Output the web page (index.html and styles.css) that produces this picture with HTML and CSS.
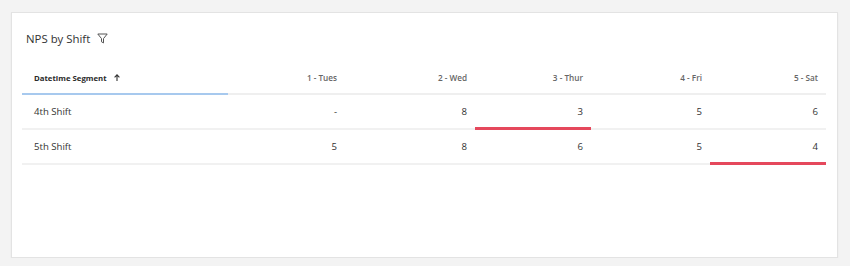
FILE: index.html
```html
<!DOCTYPE html>
<html>
<head>
<meta charset="utf-8">
<link rel="stylesheet" href="styles.css">
</head>
<body>
<div class="card">
  <div class="title">
    <span>NPS by Shift</span>
    <svg class="filter" width="11" height="11" viewBox="0 0 11 11"><path d="M0.8 1h9.4L6.5 5.6v4.3L4.5 8.8V5.6Z" fill="none" stroke="#555" stroke-width="1" stroke-linejoin="round"/></svg>
  </div>
  <table class="grid">
    <colgroup>
      <col class="c0"><col class="c1"><col class="c2"><col class="c3"><col class="c4"><col class="c5">
    </colgroup>
    <thead>
      <tr>
        <th class="seg">Datetime Segment <svg class="sort" width="6" height="7" viewBox="0 0 6 7"><path d="M3 7V1M0.6 3.3L3 0.9l2.4 2.4" fill="none" stroke="#333" stroke-width="1.1"/></svg></th>
        <th>1 - Tues</th>
        <th>2 - Wed</th>
        <th>3 - Thur</th>
        <th>4 - Fri</th>
        <th>5 - Sat</th>
      </tr>
    </thead>
    <tbody>
      <tr>
        <td class="label">4th Shift</td>
        <td>-</td>
        <td>8</td>
        <td class="low">3</td>
        <td>5</td>
        <td>6</td>
      </tr>
      <tr>
        <td class="label">5th Shift</td>
        <td>5</td>
        <td>8</td>
        <td>6</td>
        <td>5</td>
        <td class="low">4</td>
      </tr>
    </tbody>
  </table>
</div>
</body>
</html>
```

FILE: styles.css
```css
html, body {
  margin: 0;
  padding: 0;
  background: #f3f3f3;
  font-family: "Open Sans", "Noto Sans", sans-serif;
}
.card {
  margin: 12px 0 0 11px;
  width: 825px;
  height: 244px;
  background: #fff;
  border: 1px solid #e3e3e3;
  box-shadow: 0 1px 2px rgba(0,0,0,0.04);
}
.title {
  display: flex;
  align-items: center;
  gap: 7px;
  height: 22px;
  margin: 14px 0 0 14px;
  font-size: 11.4px;
  color: #333;
}
.filter {
  display: block;
}
.grid {
  margin: 13px 0 0 10px;
  width: 804px;
  border-collapse: separate;
  border-spacing: 0;
  table-layout: fixed;
}
.c0 { width: 206px; }
.c1 { width: 117px; }
.c2 { width: 130px; }
.c3 { width: 116px; }
.c4 { width: 119px; }
.c5 { width: 116px; }
th {
  height: 31px;
  padding: 0 8px 0 0;
  text-align: right;
  font-size: 8.2px;
  font-weight: 600;
  color: #666;
  border-bottom: 2px solid #efefef;
  white-space: nowrap;
}
th.seg {
  text-align: left;
  padding-left: 12px;
  font-size: 7.8px;
  color: #2a2a2a;
  font-weight: 700;
  border-bottom-color: #a7c9ee;
}
.sort {
  margin-left: 5px;
  vertical-align: 0;
}
td {
  height: 33px;
  padding: 0 8px 0 0;
  text-align: right;
  font-size: 9.6px;
  color: #333;
  border-bottom: 2px solid #f1f1f1;
}
td.label {
  text-align: left;
  padding-left: 12px;
}
td.low {
  border-bottom-color: #e5485c;
  box-shadow: inset 0 -1px 0 #e5485c;
}
```
